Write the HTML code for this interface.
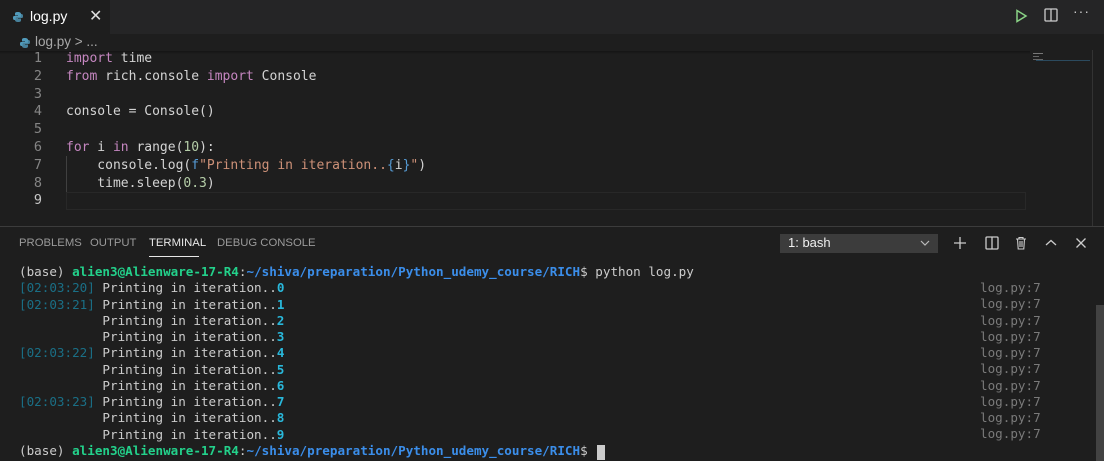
<!DOCTYPE html>
<html><head><meta charset="utf-8"><style>
*{margin:0;padding:0;box-sizing:border-box}
body{width:1104px;height:461px;background:#1e1e1e;overflow:hidden;position:relative;font-family:"Liberation Sans","DejaVu Sans",sans-serif}
.abs{position:absolute}
.tabbar{left:0;top:0;width:1104px;height:34px;background:#252526}
.tab{left:0;top:0;width:110px;height:34px;background:#1e1e1e;color:#fff;font-size:14px}
.code{font-family:"DejaVu Sans Mono",monospace;font-size:13px;white-space:pre;color:#d4d4d4;line-height:17.8px}
.ln{font-family:"DejaVu Sans Mono",monospace;font-size:13.5px;color:#858585;width:42px;text-align:right;white-space:pre;line-height:17.8px}
.kw{color:#c586c0}.st{color:#ce9178}.nm{color:#b5cea8}.bl{color:#569cd6}
.term{font-family:"DejaVu Sans Mono",monospace;font-size:12.6px;white-space:pre;color:#cccccc;line-height:16.27px}
.g{color:#23d18b;font-weight:bold}.b{color:#3b8eea;font-weight:bold}.ts{color:#1a6f86}.c{color:#29b8db;font-weight:bold}.dim{color:#7a7a7a}
.ptab{font-size:11.3px;color:#9a9a9a;top:237px}
</style></head><body>
<div class="abs tabbar"></div>
<div class="abs tab">
  <svg class="abs" style="left:12px;top:11px" width="12" height="12" viewBox="0 0 12 12"><path d="M6 1C3 1 3 2 3 3v1.5h3V5H2C1 5 1 6.5 1 7s0 2 1.5 2H3.5V7.5C3.5 6.5 4 6 5 6h3c1 0 1-.5 1-1V3C9 1.5 7.5 1 6 1z" fill="#519aba"/><path d="M6 11c3 0 3-1 3-2V7.5H6V7h4c1 0 1-1.5 1-2s0-2-1.5-2H8.5v1.5c0 1-.5 1.5-1.5 1.5H4c-1 0-1 .5-1 1V9c0 1.5 1.5 2 3 2z" fill="#519aba" opacity=".8"/></svg>
  <div class="abs" style="left:30px;top:8px">log.py</div>
  <div class="abs" style="left:89px;top:6px;font-size:16px;color:#ddd">✕</div>
</div>
<svg class="abs" style="left:1014px;top:9px" width="14" height="14" viewBox="0 0 14 14"><path d="M3 1.5L12 7 3 12.5z" fill="none" stroke="#89d185" stroke-width="1.5"/></svg>
<svg class="abs" style="left:1044px;top:8px" width="14" height="14" viewBox="0 0 14 14"><rect x="1" y="1" width="12" height="12" rx="1" fill="none" stroke="#ccc" stroke-width="1.3"/><line x1="7" y1="1" x2="7" y2="13" stroke="#ccc" stroke-width="1.3"/></svg>
<div class="abs" style="left:1073px;top:3px;color:#ccc;font-size:14px;letter-spacing:1px">···</div>
<svg class="abs" style="left:19px;top:37px" width="12" height="12" viewBox="0 0 12 12"><path d="M6 1C3 1 3 2 3 3v1.5h3V5H2C1 5 1 6.5 1 7s0 2 1.5 2H3.5V7.5C3.5 6.5 4 6 5 6h3c1 0 1-.5 1-1V3C9 1.5 7.5 1 6 1z" fill="#519aba"/><path d="M6 11c3 0 3-1 3-2V7.5H6V7h4c1 0 1-1.5 1-2s0-2-1.5-2H8.5v1.5c0 1-.5 1.5-1.5 1.5H4c-1 0-1 .5-1 1V9c0 1.5 1.5 2 3 2z" fill="#519aba" opacity=".8"/></svg>
<div class="abs" style="left:35px;top:34px;font-size:13.5px;color:#a9a9a9">log.py &gt; ...</div>
<div class="abs" style="left:0;top:51px;width:1030px;height:3px;background:linear-gradient(#141414,#1e1e1e)"></div>
<div class="abs" style="left:1033px;top:53px;width:10px;height:1px;background:#777"></div>
<div class="abs" style="left:1033px;top:56px;width:6px;height:1px;background:#666"></div>
<div class="abs" style="left:1033px;top:59px;width:10px;height:1px;background:#666"></div>
<div class="abs" style="left:1036px;top:60px;width:54px;height:1px;background:#2b4a5e"></div>
<div class="abs" style="left:1092px;top:50px;width:1px;height:176px;background:#333"></div>
<div class="abs" style="left:66px;top:192px;width:960px;height:18px;border:1px solid #282828"></div>
<div class="abs" style="left:66px;top:156px;width:1px;height:36px;background:#404040"></div>
<div class="abs ln" style="left:0;top:50px">1
2
3
4
5
6
7
8
<span style="color:#c6c6c6">9</span></div>
<div class="abs code" style="left:66px;top:50px"><span class="kw">import</span> time
<span class="kw">from</span> rich.console <span class="kw">import</span> Console

console = Console()

<span class="kw">for</span> i <span class="kw">in</span> range(<span class="nm">10</span>):
    console.log(<span class="bl">f</span><span class="st">"Printing in iteration..</span><span class="bl">{</span>i<span class="bl">}</span><span class="st">"</span>)
    time.sleep(<span class="nm">0.3</span>)
</div>
<div class="abs" style="left:0;top:226px;width:1104px;height:1px;background:#3c3c3c"></div>
<div class="abs ptab" style="left:19px">PROBLEMS</div>
<div class="abs ptab" style="left:90px">OUTPUT</div>
<div class="abs ptab" style="left:149px;color:#e7e7e7">TERMINAL</div>
<div class="abs" style="left:149px;top:256px;width:50px;height:1px;background:#e7e7e7"></div>
<div class="abs ptab" style="left:217px">DEBUG CONSOLE</div>
<div class="abs" style="left:780px;top:234px;width:158px;height:19px;background:#3c3c3c"></div>
<div class="abs" style="left:788px;top:235px;font-size:13px;color:#f0f0f0">1: bash</div>
<svg class="abs" style="left:920px;top:240px" width="10" height="7" viewBox="0 0 10 7"><path d="M1 1l4 4 4-4" fill="none" stroke="#bbb" stroke-width="1.2"/></svg>
<svg class="abs" style="left:953px;top:236px" width="14" height="14"><path d="M7 1v12M1 7h12" stroke="#ccc" stroke-width="1.3"/></svg>
<svg class="abs" style="left:985px;top:236px" width="14" height="14"><rect x="1" y="1" width="12" height="12" rx="1" fill="none" stroke="#ccc" stroke-width="1.3"/><line x1="7" y1="1" x2="7" y2="13" stroke="#ccc" stroke-width="1.3"/></svg>
<svg class="abs" style="left:1014px;top:236px" width="14" height="14"><path d="M2 3h10M5 3V1.5h4V3M3.5 3l.7 10h5.6l.7-10M6 5v6M8 5v6" fill="none" stroke="#ccc" stroke-width="1.1"/></svg>
<svg class="abs" style="left:1045px;top:239px" width="12" height="8"><path d="M1 6l5-4.5 5 4.5" fill="none" stroke="#ccc" stroke-width="1.3"/></svg>
<svg class="abs" style="left:1075px;top:237px" width="12" height="12"><path d="M1.5 1.5l9 9M10.5 1.5l-9 9" stroke="#ccc" stroke-width="1.3"/></svg>
<div class="abs term" style="left:19px;top:264px">(base) <span class="g">alien3@Alienware-17-R4</span>:<span class="b">~/shiva/preparation/Python_udemy_course/RICH</span>$ python log.py
<span class="ts">[02:03:20]</span> Printing in iteration..<span class="c">0</span>
<span class="ts">[02:03:21]</span> Printing in iteration..<span class="c">1</span>
           Printing in iteration..<span class="c">2</span>
           Printing in iteration..<span class="c">3</span>
<span class="ts">[02:03:22]</span> Printing in iteration..<span class="c">4</span>
           Printing in iteration..<span class="c">5</span>
           Printing in iteration..<span class="c">6</span>
<span class="ts">[02:03:23]</span> Printing in iteration..<span class="c">7</span>
           Printing in iteration..<span class="c">8</span>
           Printing in iteration..<span class="c">9</span>
(base) <span class="g">alien3@Alienware-17-R4</span>:<span class="b">~/shiva/preparation/Python_udemy_course/RICH</span>$ </div>
<div class="abs" style="left:597px;top:445px;width:8px;height:15px;background:#cccccc"></div>
<div class="abs term dim" style="left:980px;top:280px">log.py:7
log.py:7
log.py:7
log.py:7
log.py:7
log.py:7
log.py:7
log.py:7
log.py:7
log.py:7</div>
<div class="abs" style="left:1096px;top:305px;width:8px;height:156px;background:#424242"></div>
</body></html>
